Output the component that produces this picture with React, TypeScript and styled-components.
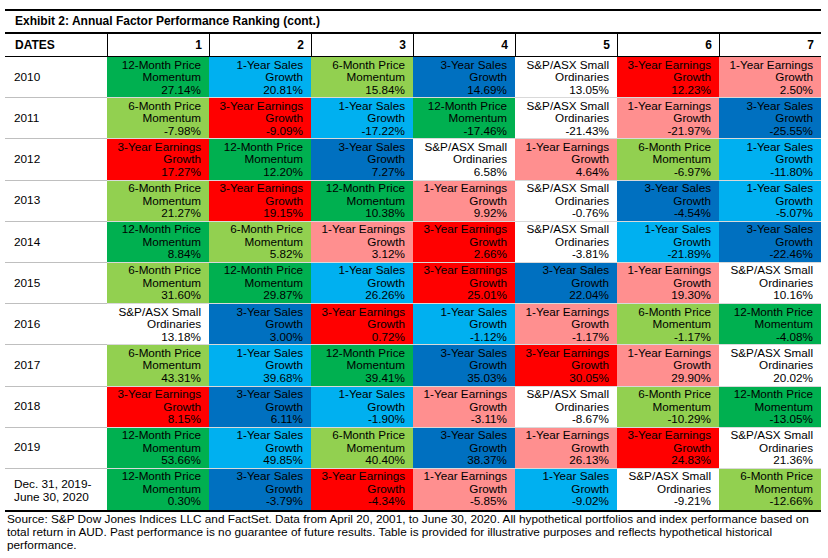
import React from "react";
import styled, { createGlobalStyle } from "styled-components";

const GlobalStyle = createGlobalStyle`
  html, body {
    margin: 0;
    padding: 0;
    background: #ffffff;
  }
  body {
    font-family: "Liberation Sans", Arial, sans-serif;
    color: #000000;
  }
`;

type FactorKey = "m12" | "m6" | "s1" | "s3" | "e1" | "e3" | "spx";

const FACTORS: Record<FactorKey, { lines: [string, string]; color: string }> = {
  m12: { lines: ["12-Month Price", "Momentum"], color: "#00B050" },
  m6: { lines: ["6-Month Price", "Momentum"], color: "#92D050" },
  s1: { lines: ["1-Year Sales", "Growth"], color: "#00B0F0" },
  s3: { lines: ["3-Year Sales", "Growth"], color: "#0070C0" },
  e1: { lines: ["1-Year Earnings", "Growth"], color: "#FF8F8F" },
  e3: { lines: ["3-Year Earnings", "Growth"], color: "#FF0000" },
  spx: { lines: ["S&P/ASX Small", "Ordinaries"], color: "#FFFFFF" },
};

type Entry = [FactorKey, string];

const ROWS: { date: string[]; cells: Entry[] }[] = [
  { date: ["2010"], cells: [["m12", "27.14%"], ["s1", "20.81%"], ["m6", "15.84%"], ["s3", "14.69%"], ["spx", "13.05%"], ["e3", "12.23%"], ["e1", "2.50%"]] },
  { date: ["2011"], cells: [["m6", "-7.98%"], ["e3", "-9.09%"], ["s1", "-17.22%"], ["m12", "-17.46%"], ["spx", "-21.43%"], ["e1", "-21.97%"], ["s3", "-25.55%"]] },
  { date: ["2012"], cells: [["e3", "17.27%"], ["m12", "12.20%"], ["s3", "7.27%"], ["spx", "6.58%"], ["e1", "4.64%"], ["m6", "-6.97%"], ["s1", "-11.80%"]] },
  { date: ["2013"], cells: [["m6", "21.27%"], ["e3", "19.15%"], ["m12", "10.38%"], ["e1", "9.92%"], ["spx", "-0.76%"], ["s3", "-4.54%"], ["s1", "-5.07%"]] },
  { date: ["2014"], cells: [["m12", "8.84%"], ["m6", "5.82%"], ["e1", "3.12%"], ["e3", "2.66%"], ["spx", "-3.81%"], ["s1", "-21.89%"], ["s3", "-22.46%"]] },
  { date: ["2015"], cells: [["m6", "31.60%"], ["m12", "29.87%"], ["s1", "26.26%"], ["e3", "25.01%"], ["s3", "22.04%"], ["e1", "19.30%"], ["spx", "10.16%"]] },
  { date: ["2016"], cells: [["spx", "13.18%"], ["s3", "3.00%"], ["e3", "0.72%"], ["s1", "-1.12%"], ["e1", "-1.17%"], ["m6", "-1.17%"], ["m12", "-4.08%"]] },
  { date: ["2017"], cells: [["m6", "43.31%"], ["s1", "39.68%"], ["m12", "39.41%"], ["s3", "35.03%"], ["e3", "30.05%"], ["e1", "29.90%"], ["spx", "20.02%"]] },
  { date: ["2018"], cells: [["e3", "8.15%"], ["s3", "6.11%"], ["s1", "-1.90%"], ["e1", "-3.11%"], ["spx", "-8.67%"], ["m6", "-10.29%"], ["m12", "-13.05%"]] },
  { date: ["2019"], cells: [["m12", "53.66%"], ["s1", "49.85%"], ["m6", "40.40%"], ["s3", "38.37%"], ["e1", "26.13%"], ["e3", "24.83%"], ["spx", "21.36%"]] },
  { date: ["Dec. 31, 2019-", "June 30, 2020"], cells: [["m12", "0.30%"], ["s3", "-3.79%"], ["e3", "-4.34%"], ["e1", "-5.85%"], ["s1", "-9.02%"], ["spx", "-9.21%"], ["m6", "-12.66%"]] },
];

const Page = styled.div`
  width: 828px;
  height: 558px;
  box-sizing: border-box;
  padding: 9px 0 0 5px;
  overflow: hidden;
`;

const Exhibit = styled.div`
  width: 816px;
`;

const Title = styled.div`
  border-top: 2px solid #000;
  border-bottom: 2px solid #000;
  height: 21px;
  line-height: 21px;
  padding-left: 10px;
  font-size: 12px;
  font-weight: bold;
`;

const HeadRow = styled.div`
  display: grid;
  grid-template-columns: repeat(8, 102px);
`;

const HeadCell = styled.div<{ $first?: boolean }>`
  height: 22px;
  line-height: 22px;
  border-bottom: 1px solid #000;
  border-left: ${(p) => (p.$first ? "none" : "1px solid #000")};
  font-size: 12px;
  font-weight: bold;
  text-align: ${(p) => (p.$first ? "left" : "right")};
  padding: ${(p) => (p.$first ? "0 0 0 10px" : "0 7px 0 0")};
`;

const Table = styled.div`
  display: grid;
  grid-template-columns: repeat(8, 102px);
  grid-auto-rows: 41.2px;
  border-bottom: 2px solid #000;
`;

const DateCell = styled.div<{ $last?: boolean; $multi?: boolean }>`
  box-sizing: border-box;
  display: flex;
  flex-direction: column;
  justify-content: center;
  padding: ${(p) => (p.$multi ? "3px 0 0 9px" : "0 0 0 9px")};
  border-bottom: ${(p) => (p.$last ? "none" : "1px solid #BFBFBF")};
  font-size: 11.8px;
  line-height: 12.6px;
`;

const Cell = styled.div<{ $bg: string; $last?: boolean }>`
  box-sizing: border-box;
  background: ${(p) => p.$bg};
  border-bottom: ${(p) => (p.$last ? "none" : "1px solid #D9D9D9")};
  padding: 1.5px 8px 0 0;
  text-align: right;
  font-size: 11.7px;
  line-height: 12.5px;
  overflow: hidden;
  white-space: nowrap;
`;

const Line = styled.div``;

const Footer = styled.div`
  width: 816px;
  padding: 1px 0 0 2px;
  font-size: 11.8px;
  line-height: 13px;
  white-space: nowrap;
`;

export default function App() {
  return (
    <>
      <GlobalStyle />
      <Page>
        <Exhibit>
          <Title>Exhibit 2: Annual Factor Performance Ranking (cont.)</Title>
          <HeadRow>
            <HeadCell $first>DATES</HeadCell>
            {[1, 2, 3, 4, 5, 6, 7].map((n) => (
              <HeadCell key={n}>{n}</HeadCell>
            ))}
          </HeadRow>
          <Table>
            {ROWS.map((row, ri) => {
              const last = ri === ROWS.length - 1;
              return (
                <React.Fragment key={ri}>
                  <DateCell $last={last} $multi={row.date.length > 1}>
                    {row.date.map((d) => (
                      <Line key={d}>{d}</Line>
                    ))}
                  </DateCell>
                  {row.cells.map(([k, v], ci) => (
                    <Cell key={ci} $bg={FACTORS[k].color} $last={last}>
                      <Line>{FACTORS[k].lines[0]}</Line>
                      <Line>{FACTORS[k].lines[1]}</Line>
                      <Line>{v}</Line>
                    </Cell>
                  ))}
                </React.Fragment>
              );
            })}
          </Table>
        </Exhibit>
        <Footer>
          Source: S&amp;P Dow Jones Indices LLC and FactSet. Data from April 20, 2001, to June 30, 2020. All hypothetical portfolios and index performance based on
          <br />
          total return in AUD. Past performance is no guarantee of future results. Table is provided for illustrative purposes and reflects hypothetical historical
          <br />
          performance.
        </Footer>
      </Page>
    </>
  );
}
